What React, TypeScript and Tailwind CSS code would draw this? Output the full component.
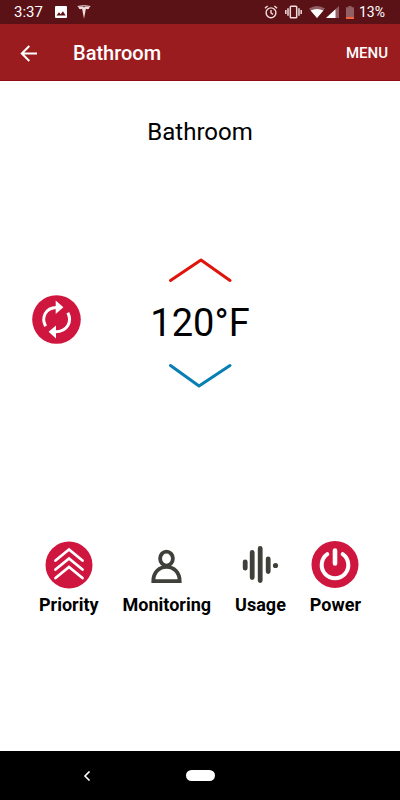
import { useState } from "react";
import type { ReactNode } from "react";

function StatusBar() {
  return (
    <div className="flex h-6 items-center justify-between bg-[#5a1216] pl-[14px] pr-[15px] text-[15px] leading-6 text-white">
      <div className="flex items-center">
        <span className="w-10">3:37</span>
        <svg className="h-3 w-3 ml-px" viewBox="0 0 12 12" aria-hidden="true">
          <rect width="12" height="12" rx="1" fill="#fff" />
          <path d="M1.5 9.5 4 6.3l1.7 2 2.2-3 2.8 4.2z" fill="#5a1216" />
        </svg>
        <svg className="ml-[10px] h-[14px] w-[14px]" viewBox="0 0 14 14" fill="#f3dede" aria-hidden="true">
          <path d="M0.5 1.1Q7-.6 13.5 1.1L13 1.9Q7 .5 1 1.9z" />
          <path d="M1.3 2.3Q3.5 1.5 5.6 1.5L7 2.6 8.4 1.5Q10.5 1.5 12.7 2.3 12 4.2 10.7 4.3 9.9 3.8 8.9 3.8L7 13.8 5.1 3.8Q4.1 3.8 3.3 4.3 2 4.2 1.3 2.3z" />
        </svg>
      </div>
      <div className="flex items-center">
        <svg className="h-[14px] w-[14px]" viewBox="0 0 14 14" fill="none" stroke="#f0dcdc" strokeWidth="1.4" aria-hidden="true">
          <circle cx="7" cy="7.8" r="4.9" />
          <path d="M7 5v3l2 1.4M.9 3.3 3.6 1M13.1 3.3 10.4 1" />
        </svg>
        <svg className="ml-[7px] h-[14px] w-[17px]" viewBox="0 0 17 14" fill="none" stroke="#f0dcdc" strokeWidth="1.5" aria-hidden="true">
          <rect x="5.3" y="1.3" width="6.4" height="11.4" rx="0.8" />
          <path d="M3 3.2v7.6M14 3.2v7.6M.8 5v4M16.2 5v4" />
        </svg>
        <svg className="ml-[7px] h-3 w-4" viewBox="0 0 16 12" aria-hidden="true">
          <path d="M8 12 0 2.5Q8-2.5 16 2.5z" fill="#915f63" />
          <path d="M8 12 1.6 4.4Q8 1.4 14.4 4.4z" fill="#fff" />
        </svg>
        <svg className="ml-px h-3 w-[13px]" viewBox="0 0 13 12" aria-hidden="true">
          <path d="M0 12 13 0v12z" fill="#915f63" />
          <path d="M0 12 9.5 3.2V12z" fill="#fff" />
        </svg>
        <svg className="ml-[7px] h-[13px] w-2" viewBox="0 0 8 13" aria-hidden="true">
          <path d="M2.5 0h3v1.3H8V13H0V1.3h2.5z" fill="#915f63" />
          <path d="M0 11h8v2H0z" fill="#f4633a" />
        </svg>
        <span className="ml-[5px] text-sm leading-6">13%</span>
      </div>
    </div>
  );
}

function RefreshIcon() {
  return (
    <svg className="h-[49px] w-[49px]" viewBox="0 0 49 49" aria-hidden="true">
      <circle cx="24.5" cy="24.5" r="24.3" fill="#cf163f" />
      <path d="M13.6 31.2C9 22.5 13.5 12.6 24.5 12.4M35.8 17.8C40.4 26.5 35.5 36.4 23.5 36.8" fill="none" stroke="#fff" strokeWidth="3" />
      <path d="M23.7 5.5 31.4 12.3 23.7 19zM24 30.4V43.4L16.6 36.8z" fill="#fff" />
    </svg>
  );
}

function PriorityIcon() {
  return (
    <svg className="h-12 w-12" viewBox="0 0 48 48" aria-hidden="true">
      <circle cx="24" cy="24" r="23.5" fill="#cf163f" />
      <path
        d="M10.5 19.5 24 8.5l13.5 11M10.5 28.5 24 17.5l13.5 11M10.5 37 24 26l13.5 11"
        fill="none"
        stroke="#fff"
        strokeWidth="2.8"
        strokeLinecap="round"
      />
    </svg>
  );
}

function MonitoringIcon() {
  return (
    <svg className="h-12 w-12" viewBox="0 0 48 48" fill="none" stroke="#40403a" strokeWidth="3.8" aria-hidden="true">
      <ellipse cx="23.5" cy="17.6" rx="6.4" ry="7" />
      <path d="M10.3 40.2C10.3 31.5 16 25.8 23.5 25.8S36.7 31.5 36.7 40.2z" />
    </svg>
  );
}

function UsageIcon() {
  return (
    <svg className="h-12 w-12" viewBox="0 0 48 48" fill="none" stroke="#40403a" strokeWidth="4.8" strokeLinecap="round" aria-hidden="true">
      <path d="M9.2 20.8v6.4M16.2 11.5v25M24.2 7.5v32M32.2 18v12.5" />
      <circle cx="39.5" cy="24.5" r="2.6" fill="#40403a" stroke="none" />
    </svg>
  );
}

function PowerIcon() {
  return (
    <svg className="h-12 w-12" viewBox="0 0 48 48" aria-hidden="true">
      <circle cx="24" cy="23.5" r="23.5" fill="#cf163f" />
      <path d="M16.3 13.2A13.3 13.3 0 1 0 31.7 13.2" fill="none" stroke="#fff" strokeWidth="4" strokeLinecap="round" />
      <path d="M24 9.5v13" stroke="#fff" strokeWidth="4.6" strokeLinecap="round" />
    </svg>
  );
}

const actions: { label: string; icon: ReactNode }[] = [
  { label: "Priority", icon: <PriorityIcon /> },
  { label: "Monitoring", icon: <MonitoringIcon /> },
  { label: "Usage", icon: <UsageIcon /> },
  { label: "Power", icon: <PowerIcon /> },
];

export default function App() {
  const [temperature, setTemperature] = useState(120);

  return (
    <div className="flex min-h-screen flex-col bg-white font-['Roboto',sans-serif] text-black">
      <StatusBar />
      <header className="flex h-[57px] items-center border-b border-[#8f0d12] bg-[#9b1c1f] pl-5 pr-3 pt-0.5 text-white">
        <button type="button" aria-label="Back" className="mr-9">
          <svg className="h-[17px] w-[17px]" viewBox="0 0 17 17" fill="none" stroke="#fff" strokeWidth="2" aria-hidden="true">
            <path d="M17 8.5H1.8M9.3 1 1.8 8.5l7.5 7.5" />
          </svg>
        </button>
        <h1 className="flex-1 text-xl font-medium leading-7">Bathroom</h1>
        <button type="button" className="text-[15px] font-medium leading-6">
          MENU
        </button>
      </header>

      <main className="flex flex-1 flex-col items-center pt-[35px]">
        <h2 className="text-2xl leading-8">Bathroom</h2>

        <section className="mt-[109px] grid w-full grid-cols-[1fr_auto_1fr] items-center px-8">
          <button type="button" aria-label="Refresh" className="justify-self-start pb-2">
            <RefreshIcon />
          </button>
          <div className="flex flex-col items-center">
            <button type="button" aria-label="Raise temperature" onClick={() => setTemperature(temperature + 1)}>
              <svg className="h-[26px] w-16" viewBox="0 0 64 26" fill="none" stroke="#e0140c" strokeWidth="3" strokeLinecap="round" strokeLinejoin="round" aria-hidden="true">
                <path d="M2.5 23.5 33 3l29 20.5" />
              </svg>
            </button>
            <output className="my-5 text-[38px] leading-10">{temperature}°F</output>
            <button type="button" aria-label="Lower temperature" onClick={() => setTemperature(temperature - 1)}>
              <svg className="h-[26px] w-16" viewBox="0 0 64 26" fill="none" stroke="#087fb3" strokeWidth="3" strokeLinecap="round" strokeLinejoin="round" aria-hidden="true">
                <path d="M2.5 2.5 31 23l31-20.5" />
              </svg>
            </button>
          </div>
        </section>

        <nav className="mt-auto mb-[134px] flex justify-center gap-6">
          {actions.map((action) => (
            <button key={action.label} type="button" className="flex flex-col items-center gap-1 text-lg font-bold leading-6">
              {action.icon}
              {action.label}
            </button>
          ))}
        </nav>
      </main>

      <footer className="grid h-[49px] grid-cols-[1fr_auto_1fr] items-center bg-black px-[82px]">
        <button type="button" aria-label="System back" className="justify-self-start">
          <svg className="h-[10px] w-[10px]" viewBox="0 0 10 10" fill="none" stroke="#fff" strokeWidth="1.6" aria-hidden="true">
            <path d="M7.5.5 3 5l4.5 4.5" />
          </svg>
        </button>
        <button type="button" aria-label="Home" className="h-[11px] w-[29px] rounded-full bg-white" />
      </footer>
    </div>
  );
}
